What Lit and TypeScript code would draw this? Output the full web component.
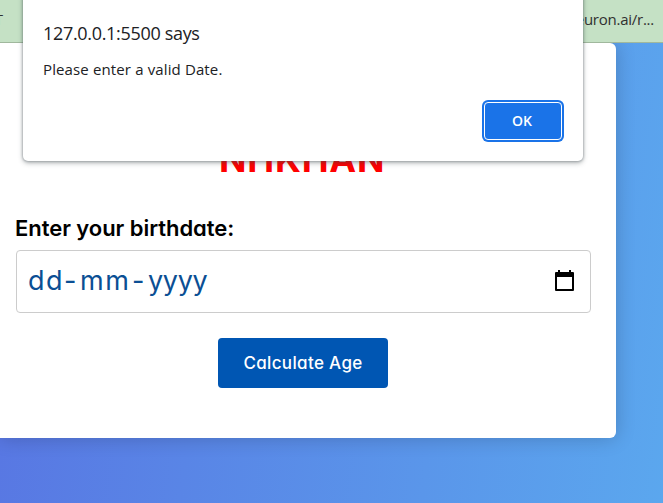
import { LitElement, html, css, svg } from "lit";
import { customElement } from "lit/decorators.js";

@customElement("alert-dialog")
class AlertDialog extends LitElement {
  static styles = css`
    :host { display: block; box-sizing: border-box; width: 560px; height: 170px; padding: 30px 20px 20px;
      background: #fff; border-radius: 5px; color: #202124; font-family: "Open Sans", "Noto Sans", sans-serif;
      box-shadow: 0 0 2px 1px rgba(60, 70, 75, .24), 0 2px 5px rgba(60, 70, 75, .4); }
    .dialog { display: flex; flex-direction: column; height: 100%; }
    .origin { font-size: 18px; line-height: 24px; letter-spacing: -.32px; white-space: nowrap; }
    .message { font-size: 15px; line-height: 22px; letter-spacing: .13px; margin-top: 13px; white-space: nowrap; }
    .ok { align-self: flex-end; margin-top: 22px; width: 78px; height: 38px; margin-right: 1px; border: 1px solid #fff; border-radius: 4px;
      box-shadow: 0 0 0 2px #1a73e8; background: #1a73e8; color: #fff; font: 600 14px "Open Sans", sans-serif; padding: 0 2px 2px 0; letter-spacing: -.1px; }
  `;
  render() {
    return html`<div class="dialog">
      <div class="origin">127.0.0.1:5500 says</div>
      <div class="message">Please enter a valid Date.</div>
      <button class="ok">OK</button>
    </div>`;
  }
}

@customElement("app-root")
class AppRoot extends LitElement {
  static styles = css`
    :host { display: block; position: relative; width: 663px; height: 503px; overflow: hidden;
      font-family: Inter, sans-serif; font-feature-settings: "cv11"; }
    .page { display: flex; flex-direction: column; height: 503px; background: linear-gradient(97deg, #5874e2, #5ba7ee); }
    .bookmarks { box-sizing: border-box; flex: none; height: 43px; display: flex; justify-content: space-between;
      padding-right: 9px; background: #c5e1c5; border-bottom: 1px solid #a0b89d; font: 15px/40px "Open Sans", sans-serif; color: #303030; }
    .left { width: 3px; display: flex; justify-content: flex-end; line-height: 38px; }
    .right { letter-spacing: -.25px; white-space: nowrap; line-height: 39px; }
    .viewport { flex: 1; overflow: hidden; }
    .card { box-sizing: border-box; width: 616px; height: 395px; padding: 91px 25px 0 16px; background: #fff; border-radius: 0 6px 6px 0;
      box-shadow: 0 0 20px rgba(0, 0, 0, .2); display: flex; flex-direction: column; }
    .title { margin: 0 0 0 203px; color: #f00; font-size: 36px; font-weight: 700; line-height: 50px; letter-spacing: .8px; white-space: nowrap; }
    .label { margin: 27px 0 0 -1px; font-size: 22px; font-weight: 600; line-height: 34px; letter-spacing: -.05px; white-space: nowrap; }
    .field { box-sizing: border-box; height: 63px; margin-top: 5px; width: 575px; border: 1px solid #ccc; border-radius: 4px; padding: 0 15px 2px 11px;
      display: flex; align-items: center; justify-content: space-between; color: #0b4f94; font-size: 27px; }
    .date { display: flex; }
    .day { width: 36px; letter-spacing: 1.4px; }
    .month { width: 52px; letter-spacing: 1.5px; }
    .dash { width: 16px; }
    .year { letter-spacing: -.3px; }
    .calendar { width: 21px; height: 22px; fill: #000; }
    .calculate { align-self: center; margin: 25px 2px 0 0; width: 170px; height: 50px; border: 0; border-radius: 4px; background: #0056b3; color: #fff;
      font: 500 17px Inter, sans-serif; font-feature-settings: "cv11"; letter-spacing: .35px; padding: 0 0 1px 1px; white-space: nowrap; }
    .alert { position: absolute; left: 23px; top: -9px; }
  `;
  render() {
    return html`<div class="page">
      <div class="bookmarks"><span class="left">T</span><span class="right">euron.ai/r...</span></div>
      <div class="viewport">
        <main class="card">
          <h1 class="title">NHKHAN</h1>
          <label class="label">Enter your birthdate:</label>
          <div class="field">
            <span class="date"><span class="day">dd</span><span class="dash">-</span><span class="month">mm</span><span class="dash">-</span><span class="year">yyyy</span></span>
            <svg class="calendar" viewBox="0 0 21 22">${svg`<path fill-rule="evenodd" d="M4 0h2v2h9V0h2v2h2q1 0 1 1v17q0 1-1 1H2q-1 0-1-1V3q0-1 1-1h2zM3 7v12h15V7z"/>`}</svg>
          </div>
          <button class="calculate">Calculate Age</button>
        </main>
      </div>
    </div>
    <alert-dialog class="alert" role="alertdialog"></alert-dialog>`;
  }
}
